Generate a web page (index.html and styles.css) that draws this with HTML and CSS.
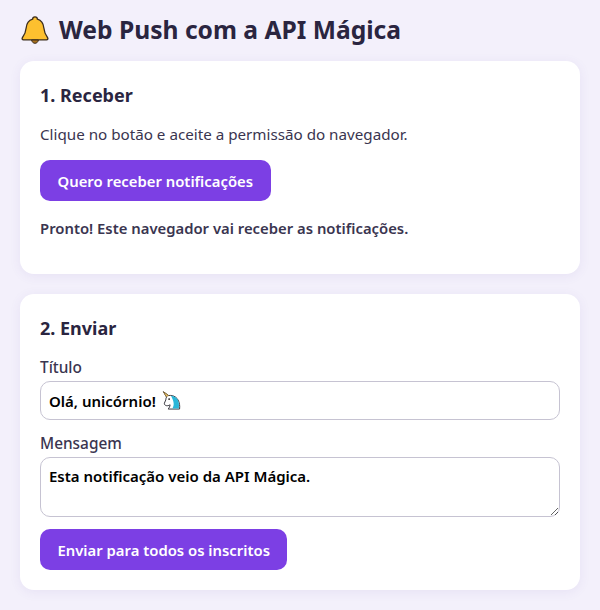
FILE: index.html
```html
<!DOCTYPE html>
<html lang="pt-BR">
<head>
<meta charset="utf-8">
<title>Web Push com a API Mágica</title>
<link rel="stylesheet" href="styles.css">
</head>
<body>
<h1 class="title"><svg class="bell" viewBox="0 0 28 28" aria-hidden="true"><path d="M14 .8c-1.500 0-2.400 1-2.400 2.400C7.300 4.500 5.600 7.800 5.200 11.800c-.4 4-1.300 6.700-3.700 9.700-.9 1.100-.2 2.400 1 2.400h23c1.200 0 1.900-1.300 1-2.400-2.400-3-3.300-5.700-3.700-9.700-.4-4-2.100-7.300-6.400-8.600C16.400 1.800 15.500.8 14 .8z" fill="#fdc02f" stroke="#3a2c1c" stroke-width="1.300"/><path d="M10.600 24c.3 2 1.700 3.300 3.400 3.300s3.100-1.300 3.400-3.300z" fill="#a8701c" stroke="#3a2c1c" stroke-width="1"/></svg><span>Web Push com a API Mágica</span></h1>
<section class="card">
<h2 class="card-title">1. Receber</h2>
<p class="text">Clique no botão e aceite a permissão do navegador.</p>
<button class="btn" type="button">Quero receber notificações</button>
<p class="status">Pronto! Este navegador vai receber as notificações.</p>
</section>
<section class="card card-send">
<h2 class="card-title">2. Enviar</h2>
<label class="label" for="t">Título</label>
<div class="input-wrap">
<input class="field" id="t" type="text" value="Olá, unicórnio!">
<svg class="unicorn" viewBox="0 0 20 20" aria-hidden="true"><path d="M1.500 .8l5.500 4c5-.8 10.500 2 11.500 9.500.2 1.500.2 3 0 4.700H6.500c1-1.300 2-2.800 2-4.500-1.300.9-2.800 1.200-4 .9-1.300-.3-2.400-1.400-2-2.600l1.500-3.400c.1-1.500.3-2.300.8-3z" fill="#fff" stroke="#33333b" stroke-width="1"/><path d="M9.500 5c4.500.2 8 3.500 8.300 8.500.1 1.500.1 3 0 4.800H11c1.500-2.500 1.500-5 1-7-.5-2.500-1.800-4.500-2.500-6.300z" fill="#29b6d8"/><path d="M1.500 .8l5.500 4-2.500 1.300z" fill="#e9c46a" stroke="#7a5a20" stroke-width=".6"/><circle cx="7.500" cy="8.500" r="1" fill="#222"/></svg>
</div>
<label class="label" for="m">Mensagem</label>
<textarea class="field area" id="m" rows="2">Esta notificação veio da API Mágica.</textarea>
<button class="btn" type="button">Enviar para todos os inscritos</button>
</section>
</body>
</html>
```
FILE: styles.css
```css
* { box-sizing: border-box; }
html, body { margin: 0; }
body {
  background: #f3f0fb;
  color: #2a2540;
  font-family: "Noto Sans", sans-serif;
  font-size: 16px;
  padding: 11px 20px 20px;
  overflow: hidden;
}
.title {
  margin: 0 0 13px;
  font-size: 24.6px;
  line-height: 37px;
  font-weight: 700;
  color: #2a2540;
  display: flex;
  align-items: center;
  gap: 10px;
  padding-left: 1px;
}
.bell { width: 28px; height: 30px; flex: none; }
.card {
  background: #fff;
  border-radius: 14px;
  padding: 20px;
  margin-bottom: 20px;
  box-shadow: 0 2px 12px rgba(90, 70, 160, 0.08);
  height: 213px;
}
.card-send { height: 296px; margin-bottom: 0; }
.card-title {
  margin: 0 0 13px;
  font-size: 18px;
  line-height: 28px;
  font-weight: 700;
}
.card-send .card-title { margin-bottom: 15px; }
.text { margin: 0 0 14px; font-size: 15.2px; line-height: 24px; color: #3a3550; }
.status { margin: 15px 0 0; font-size: 14.85px; line-height: 24px; font-weight: 600; color: #3a3550; }
.btn {
  display: block;
  height: 41px;
  padding: 0 17.5px;
  border: 0;
  border-radius: 10px;
  background: #7c3fe4;
  color: #fff;
  font: 600 14.85px "Noto Sans", sans-serif;
}
.label { display: block; font-size: 15.4px; line-height: 22px; font-weight: 500; margin-bottom: 2px; color: #3a3550; }
.input-wrap { position: relative; margin-bottom: 13px; }
.field {
  display: block;
  width: 100%;
  border: 1px solid #c6c3d2;
  border-radius: 10px;
  padding: 8px;
  background: #fff;
  color: #000;
  font: 600 15px/20px "Noto Sans", sans-serif;
  outline: none;
}
input.field { height: 39px; }
.area { height: 60px; margin-bottom: 12px; resize: vertical; }
.unicorn { position: absolute; left: 122px; top: 9px; width: 19px; height: 21px; }
```
